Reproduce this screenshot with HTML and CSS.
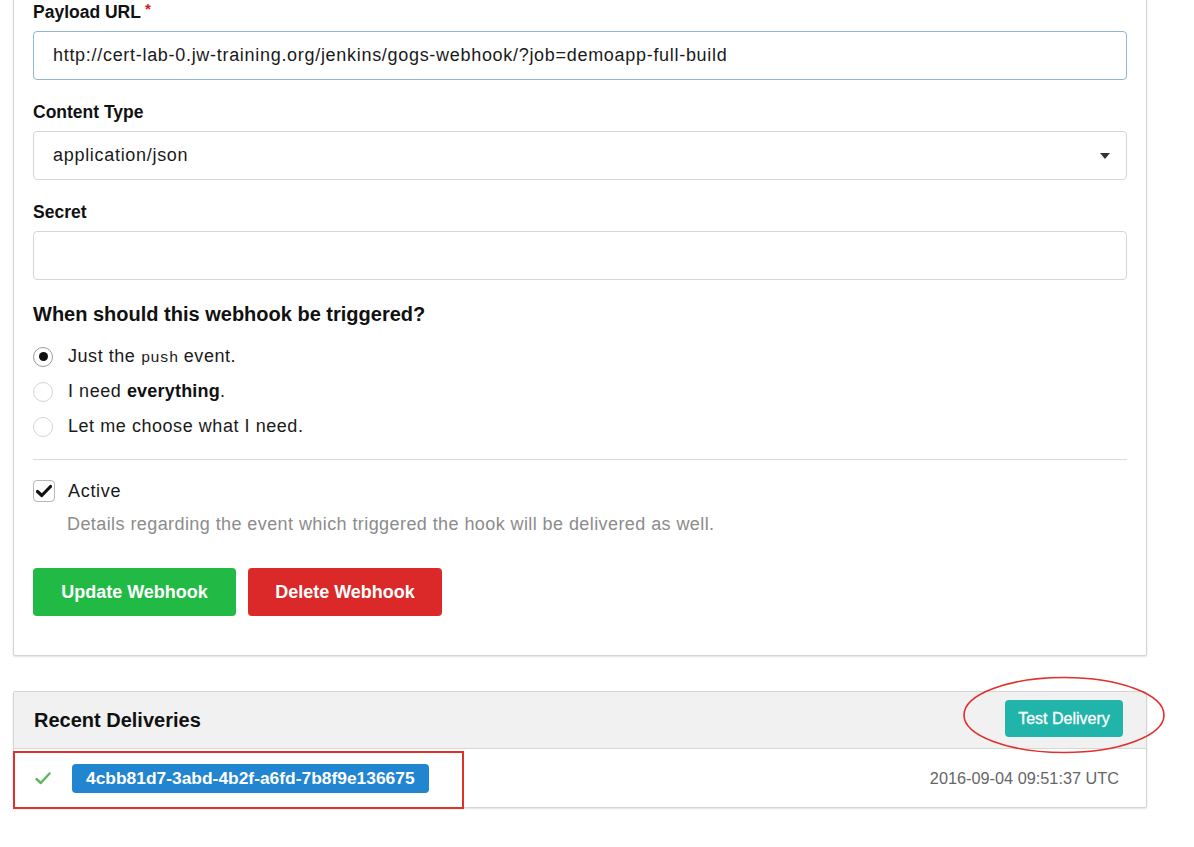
FILE: index.html
```html
<!DOCTYPE html>
<html>
<head>
<meta charset="utf-8">
<link rel="stylesheet" href="styles.css">
</head>
<body>
<div class="page">
  <form class="panel form-panel">
    <div class="field">
      <label class="label">Payload URL<span class="req">*</span></label>
      <div class="input focus">http://cert-lab-0.jw-training.org/jenkins/gogs-webhook/?job=demoapp-full-build</div>
    </div>
    <div class="field">
      <label class="label">Content Type</label>
      <div class="input select">
        <span>application/json</span>
        <svg class="caret" width="10" height="6" viewBox="0 0 10 6"><path d="M0 0H10L5 6Z" fill="#333"/></svg>
      </div>
    </div>
    <div class="field">
      <label class="label">Secret</label>
      <div class="input"></div>
    </div>
    <h3 class="question">When should this webhook be triggered?</h3>
    <div class="radios">
      <div class="radio-row"><span class="radio checked"><span class="dot"></span></span><span>Just the <code>push</code> event.</span></div>
      <div class="radio-row"><span class="radio"></span><span>I need <b>everything</b>.</span></div>
      <div class="radio-row"><span class="radio"></span><span>Let me choose what I need.</span></div>
    </div>
    <div class="divider"></div>
    <div class="check-row">
      <span class="checkbox"><svg width="16" height="14" viewBox="0 0 16 14"><path d="M1.5 7.5L5.8 11.5L14.5 2.5" fill="none" stroke="#111" stroke-width="3.2" stroke-linecap="round" stroke-linejoin="round"/></svg></span>
      <span>Active</span>
    </div>
    <p class="help">Details regarding the event which triggered the hook will be delivered as well.</p>
    <div class="actions">
      <button type="button" class="btn green">Update Webhook</button>
      <button type="button" class="btn red">Delete Webhook</button>
    </div>
  </form>

  <div class="panel deliveries">
    <div class="deliv-head">
      <h4>Recent Deliveries</h4>
      <button type="button" class="btn teal">Test Delivery</button>
    </div>
    <div class="deliv-row">
      <svg class="ok" width="16" height="13" viewBox="0 0 16 13"><path d="M1.5 7L5.8 11L14.5 1.5" fill="none" stroke="#5cb85c" stroke-width="2.4" stroke-linecap="round" stroke-linejoin="round"/></svg>
      <span class="badge">4cbb81d7-3abd-4b2f-a6fd-7b8f9e136675</span>
      <span class="date">2016-09-04 09:51:37 UTC</span>
    </div>
    <svg class="mark-ellipse" width="206" height="80" viewBox="0 0 206 80"><ellipse cx="103" cy="40" rx="100" ry="37.5" fill="none" stroke="#e0302a" stroke-width="1.6"/></svg>
    <div class="mark-rect"></div>
  </div>
</div>
</body>
</html>
```
FILE: styles.css
```css
* { box-sizing: border-box; }
html, body { margin: 0; padding: 0; background: #fff; }
body {
  font-family: "Liberation Sans", Arial, Helvetica, sans-serif;
  color: #222;
  font-size: 18px;
  overflow: hidden;
  height: 847px;
}
.page { width: 1134px; margin-left: 13px; }

.panel {
  background: #fff;
  border: 1px solid #d4d4d5;
  border-radius: 2px;
  box-shadow: 0 1px 2px rgba(0,0,0,0.12);
}
.form-panel {
  margin: -20px 0 0 0;
  padding: 21px 19px 39px 19px;
}
.field { margin-bottom: 22px; }
.label {
  display: block;
  font-weight: bold;
  font-size: 17.5px;
  line-height: 20px;
  color: #111;
  margin-bottom: 9px;
}
.req { color: #d01919; font-size: 15px; vertical-align: top; position: relative; top: -3px; margin-left: 4px; }
.input {
  height: 49px;
  border: 1px solid #d6d6d6;
  border-radius: 4px;
  padding: 0 19px;
  display: flex;
  align-items: center;
  font-size: 18px;
  letter-spacing: 0.7px;
  color: #1a1a1a;
}
.input.focus { border-color: #8fb6d6; }
.select { justify-content: space-between; }
.caret { margin-right: -3px; }

.question {
  margin: 0;
  font-size: 20px;
  line-height: 24px;
  font-weight: bold;
  color: #111;
}
.radios { margin-top: 13px; }
.radio-row {
  height: 35px;
  display: flex;
  align-items: center;
  gap: 15px;
  font-size: 18px;
  letter-spacing: 0.55px;
  color: #1a1a1a;
}
.radio {
  width: 20px; height: 20px;
  border-radius: 50%;
  border: 1px solid #d4d4d4;
  display: flex; align-items: center; justify-content: center;
  flex: none;
}
.radio.checked { border-color: #9a9a9a; }
.dot { width: 9px; height: 9px; border-radius: 50%; background: #111; }
code { font-family: "Liberation Mono", "DejaVu Sans Mono", monospace; font-size: 15.5px; letter-spacing: 0; }
b { font-weight: bold; color: #111; letter-spacing: 0.2px; }

.divider { height: 1px; background: #dcdcdc; margin: 15px 0 20px; }
.check-row {
  height: 22px;
  display: flex;
  align-items: center;
  gap: 13px;
  font-size: 18px;
  letter-spacing: 0.7px;
  color: #1a1a1a;
}
.checkbox {
  width: 22px; height: 22px;
  border: 1px solid #b8b8b8;
  border-radius: 4px;
  display: flex; align-items: center; justify-content: center;
  flex: none;
}
.help {
  margin: 11px 0 0 34px;
  line-height: 22px;
  font-size: 18px;
  letter-spacing: 0.42px;
  color: #8c8c8c;
}
.actions { margin-top: 33px; display: flex; gap: 12px; }
.btn {
  font-family: inherit;
  font-weight: bold;
  color: #fff;
  border: none;
  border-radius: 4px;
  cursor: pointer;
}
.green { background: #21ba45; width: 203px; height: 48px; font-size: 18px; }
.red { background: #db2828; width: 194px; height: 48px; font-size: 18px; }

.deliveries { margin-top: 35px; position: relative; }
.deliv-head {
  height: 57px;
  background: #f1f1f1;
  border-bottom: 1px solid #d8d8d8;
  display: flex;
  align-items: center;
  justify-content: space-between;
  padding: 0 23px 3px 20px;
}
.deliv-head h4 { margin: 3px 0 0 0; font-size: 20px; font-weight: bold; color: #111; }
.teal { background: #21b4aa; width: 118px; height: 37px; font-size: 16px; font-weight: normal; -webkit-text-stroke: 0.3px #fff; }
.deliv-row {
  height: 58px;
  display: flex;
  align-items: center;
  padding: 0 27px 0 21px;
}
.ok { margin-right: 21px; }
.badge {
  background: #2185d0;
  color: #fff;
  font-weight: bold;
  font-size: 17.4px;
  height: 29px;
  line-height: 29px;
  padding: 0 14px;
  border-radius: 4px;
}
.date { margin-left: auto; color: #666; font-size: 16.3px; }

.mark-ellipse { position: absolute; left: 947px; top: -17px; }
.mark-rect {
  position: absolute;
  left: -1px; top: 59px;
  width: 451px; height: 58px;
  border: 2px solid #e0302a;
}
```
